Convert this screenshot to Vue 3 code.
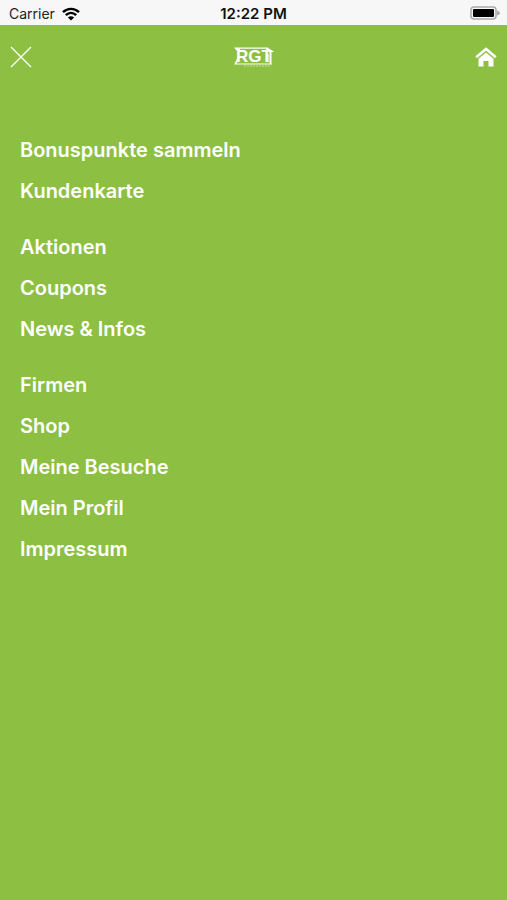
<template>
  <div class="screen">
    <div class="status-bar">
      <div class="carrier">
        <span>Carrier</span>
        <svg class="wifi" viewBox="0 0 18 14" aria-hidden="true">
          <path d="M1 5.2C5.6 .7 12.4 .7 17 5.2" />
          <path d="M3.8 8.1C6.9 5.2 11.1 5.2 14.2 8.1" />
          <path class="wifi-dot" d="M9 13.6 5.9 10.4C7.7 8.9 10.3 8.9 12.1 10.4Z" />
        </svg>
      </div>
      <time class="clock">12:22 PM</time>
      <svg class="battery" viewBox="0 0 30 14" aria-hidden="true">
        <rect class="battery-case" x="1" y="1" width="25" height="12" rx="3" />
        <rect class="battery-level" x="3" y="3" width="21" height="8" rx="1" />
        <path class="battery-tip" d="M27 4.5Q30 5.5 30 7T27 9.5Z" />
      </svg>
    </div>

    <header class="header">
      <button class="icon-button" type="button" aria-label="Menü schließen">
        <svg class="close" viewBox="0 0 22 22">
          <path d="M1 1 21 21M21 1 1 21" />
        </svg>
      </button>
      <svg class="logo" viewBox="0 0 40 20" role="img" aria-label="RGT">
        <path d="M0 .5H34V1.8H6V3.5H2.5Z" />
        <path d="M0 17.5 3.5 11H5.5L2.5 16.5H38V17.5Z" />
        <text x="2" y="15">RGT</text>
        <path d="M33 .5 40 4.5 37.5 5.5V17H35.5V5H32V2Z" />
        <path d="M33 7H34.5V15H33Z" />
        <path class="logo-line" d="M10 19H36" />
      </svg>
      <a class="icon-button home-link" href="#" aria-label="Startseite">
        <svg class="home" viewBox="0 0 22 20">
          <path class="roof" d="M1.2 10.2 11 2 20.8 10.2" />
          <path d="M3.5 11.8 11 5.6 18.5 11.8V19.5H13.5V14H8.5V19.5H3.5Z" />
        </svg>
      </a>
    </header>

    <nav class="menu">
      <ul v-for="(group, index) in menuGroups" :key="index" class="menu-group">
        <li v-for="item in group" :key="item">
          <a class="menu-link" href="#">{{ item }}</a>
        </li>
      </ul>
    </nav>
  </div>
</template>

<script setup>
const menuGroups = [
  ['Bonuspunkte sammeln', 'Kundenkarte'],
  ['Aktionen', 'Coupons', 'News & Infos'],
  ['Firmen', 'Shop', 'Meine Besuche', 'Mein Profil', 'Impressum']
]
</script>

<style>
body {
  margin: 0;
}
</style>

<style scoped>
.screen {
  min-height: 100vh;
  background: #8cbf42;
  color: #fff;
  font-family: Inter, "Liberation Sans", sans-serif;
}

.status-bar {
  display: grid;
  grid-template-columns: 1fr auto 1fr;
  align-items: center;
  height: 25px;
  padding: 0 7px;
  background: #f7f7f7;
  color: #222;
  font-size: 14px;
}

.carrier {
  display: flex;
  align-items: center;
  gap: 7px;
  padding: 2px 0 0 2px;
}

.wifi {
  width: 18px;
  height: 14px;
  fill: none;
  stroke: #000;
  stroke-width: 2.4;
}

.wifi-dot {
  fill: #000;
  stroke: none;
}

.clock {
  padding-top: 2px;
  color: #111;
  font-size: 15px;
  font-weight: 600;
}

.battery {
  justify-self: end;
  width: 30px;
  height: 14px;
}

.battery-case {
  fill: #f7f7f7;
  stroke: #aaa;
  stroke-width: 1.5;
}

.battery-level {
  fill: #000;
}

.battery-tip {
  fill: #aaa;
}

.header {
  display: grid;
  grid-template-columns: 1fr auto 1fr;
  align-items: center;
  height: 64px;
  padding: 0 10px;
}

.icon-button {
  display: flex;
  justify-self: start;
  padding: 0;
  border: 0;
  background: none;
  color: inherit;
  cursor: pointer;
}

.home-link {
  justify-self: end;
}

.close {
  width: 22px;
  height: 22px;
  fill: none;
  stroke: #fff;
  stroke-width: 1.3;
}

.logo {
  width: 40px;
  height: 20px;
  fill: #fff;
}

.logo text {
  font-family: "Liberation Sans", sans-serif;
  font-size: 17px;
  font-weight: 700;
}

.logo-line {
  stroke: #fff;
  stroke-width: 1;
  stroke-dasharray: 2 1;
  opacity: 0.5;
}

.home {
  width: 22px;
  height: 20px;
  fill: #fff;
}

.roof {
  fill: none;
  stroke: #fff;
  stroke-width: 2.6;
}

.menu {
  display: flex;
  flex-direction: column;
  gap: 15px;
  padding: 41px 20px;
}

.menu-group {
  margin: 0;
  padding: 0;
  list-style: none;
}

.menu-link {
  display: block;
  color: inherit;
  font-size: 20px;
  font-weight: 600;
  line-height: 41px;
  text-decoration: none;
}
</style>
